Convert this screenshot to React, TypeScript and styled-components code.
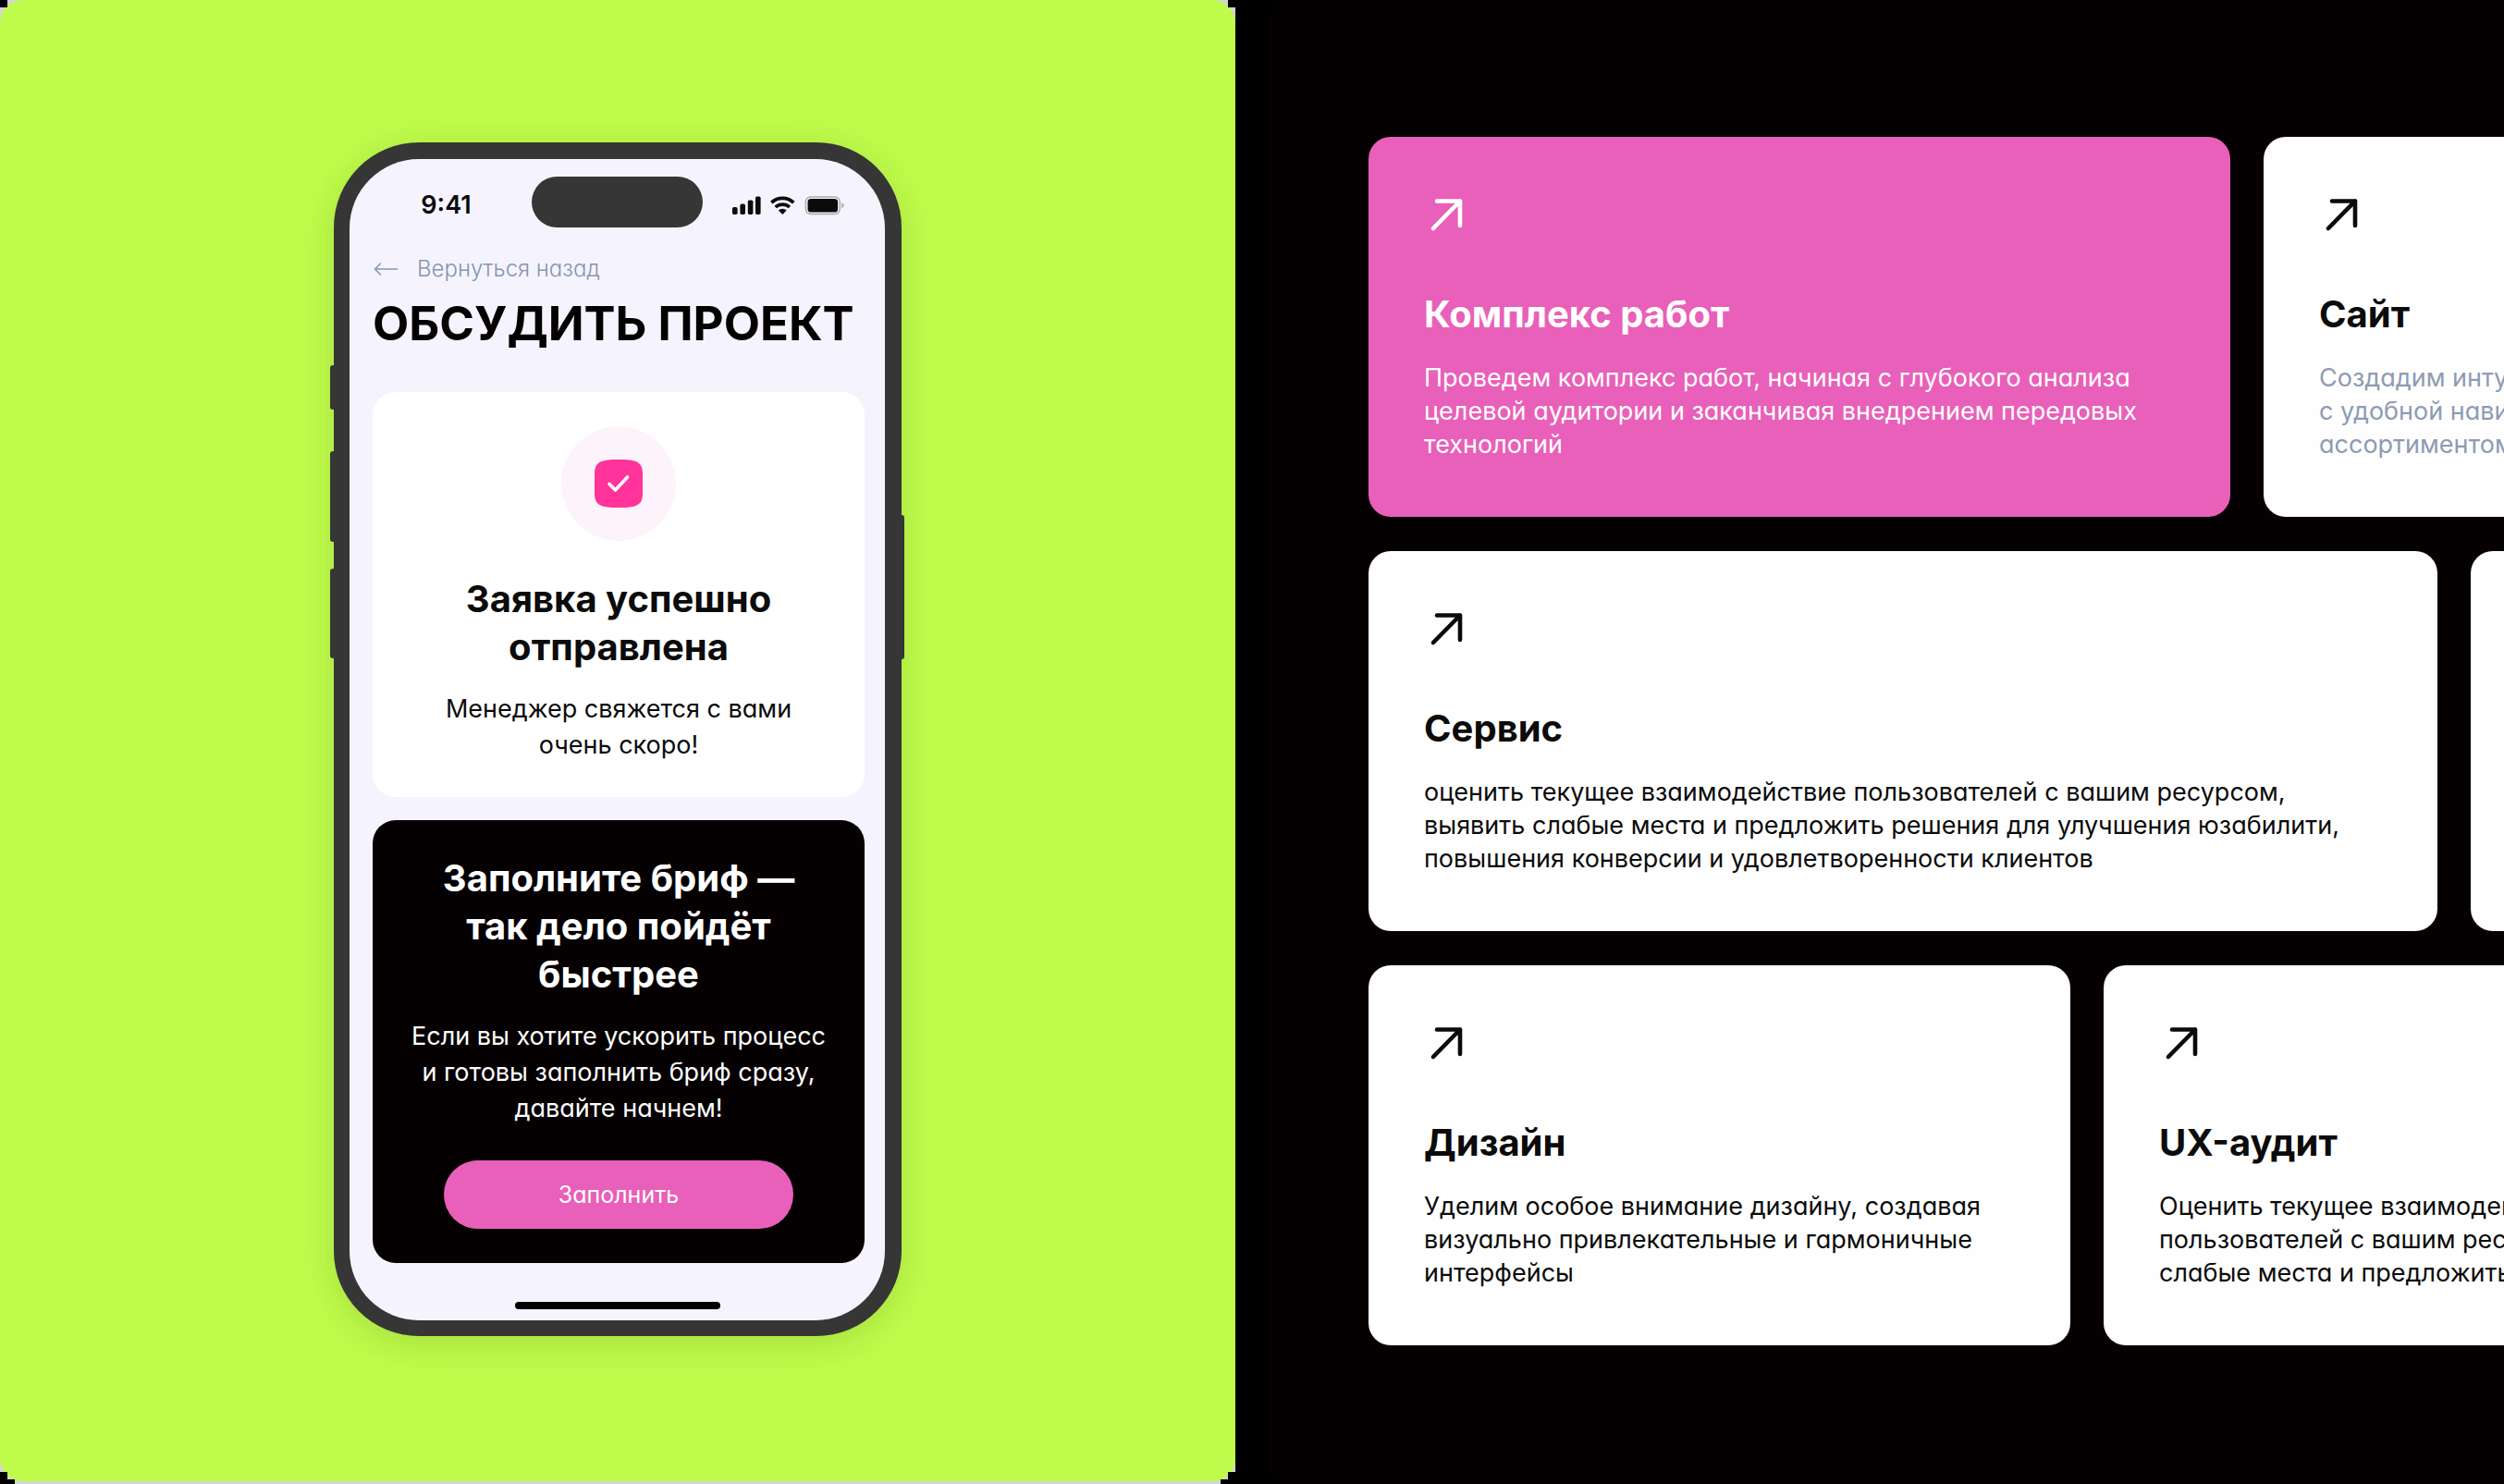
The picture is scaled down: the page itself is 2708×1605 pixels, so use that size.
import React from "react";
import styled, { createGlobalStyle } from "styled-components";

const GlobalStyle = createGlobalStyle`
  *, *::before, *::after { box-sizing: border-box; }
  body {
    margin: 0;
    background: #000;
    font-family: Inter, "Noto Sans", sans-serif;
    color: #0b0b0b;
  }
  h1, h2, h3, p { margin: 0; }
`;

const Page = styled.main`
  display: grid;
  grid-template-columns: minmax(0, 1fr) minmax(0, 1fr);
  gap: 36px;
  min-height: 100vh;
  overflow: hidden;
`;

/* Light backing with stepped corners that peeks out behind the green panel */
const Backing = styled.section`
  display: flex;
  padding-bottom: 3px;
  background: #d4d4d4;
  clip-path: polygon(
    8px 0, calc(100% - 8px) 0, calc(100% - 8px) 8px, 100% 8px,
    100% calc(100% - 13px), calc(100% - 8px) calc(100% - 13px),
    calc(100% - 8px) calc(100% - 5px), calc(100% - 16px) calc(100% - 5px),
    calc(100% - 16px) 100%, 16px 100%, 16px calc(100% - 5px),
    8px calc(100% - 5px), 8px calc(100% - 13px), 0 calc(100% - 13px), 0 8px, 8px 8px
  );
`;

const PhoneStage = styled.div`
  flex: 1;
  display: flex;
  justify-content: center;
  align-items: flex-start;
  padding: 154px 24px;
  border-radius: 25px;
  background: #bffb4a;
`;

const Phone = styled.div`
  position: relative;
  width: 614px;
  border: solid #363636;
  border-width: 18px 18px 17px 17px;
  border-radius: 92px;
  background: #363636;
  box-shadow: 0 8px 36px rgba(30, 60, 0, 0.14);
`;

const SideKey = styled.span<{ $side: "left" | "right"; $top: number; $length: number }>`
  position: absolute;
  top: ${(p) => p.$top}px;
  ${(p) => p.$side}: -21px;
  width: 8px;
  height: ${(p) => p.$length}px;
  border-radius: 3px;
  background: #363636;
`;

const Screen = styled.div`
  position: relative;
  display: flex;
  flex-direction: column;
  padding: 19px 0 12px;
  border-radius: 75px;
  background: #f5f4fe;
`;

const StatusBar = styled.div`
  display: grid;
  grid-template-columns: 1fr 185px 1fr;
  align-items: center;
  padding: 0 12px;
`;

const Clock = styled.time`
  padding-top: 6px;
  font-size: 27px;
  line-height: 32px;
  font-weight: 600;
  text-align: center;
`;

const Island = styled.div`
  height: 55px;
  border-radius: 28px;
  background: #363636;
`;

const StatusIcons = styled.div`
  display: flex;
  justify-content: center;
  padding-top: 6px;
`;

const ScreenBody = styled.div`
  display: flex;
  flex-direction: column;
  padding: 29px 22px 42px 25px;
`;

const BackLink = styled.a`
  display: flex;
  align-items: center;
  gap: 20px;
  font-size: 24px;
  line-height: 32px;
  font-weight: 300;
  font-feature-settings: "cv11";
  color: #8795b0;
  text-decoration: none;
`;

const ScreenTitle = styled.h1`
  margin: 13px 0 44px;
  font-size: 51px;
  line-height: 60px;
  font-weight: 700;
  white-space: nowrap;
  color: #050102;
`;

const Panel = styled.section<{ $dark?: boolean }>`
  display: flex;
  flex-direction: column;
  align-items: center;
  padding: 37px 0;
  border-radius: 25px;
  text-align: center;
  background: ${(p) => (p.$dark ? "#050102" : "#fff")};
  color: ${(p) => (p.$dark ? "#fff" : "#0b0b0b")};

  & + & { margin-top: 25px; }
`;

const Badge = styled.div`
  display: grid;
  place-items: center;
  width: 124px;
  height: 124px;
  margin-bottom: 37px;
  border-radius: 50%;
  background: #fdf3fb;
`;

const PanelTitle = styled.h2`
  font-size: 40px;
  line-height: 52px;
  font-weight: 700;
`;

const PanelText = styled.p`
  margin-top: 21px;
  font-size: 27px;
  line-height: 39px;
  font-feature-settings: "cv11";
  white-space: nowrap;
`;

const FillButton = styled.button`
  width: 378px;
  height: 74px;
  margin-top: 37px;
  border: 0;
  border-radius: 37px;
  background: #e860b9;
  color: #fff;
  font: inherit;
  font-size: 25px;
  font-feature-settings: "cv11";
`;

const HomeBar = styled.div`
  align-self: center;
  width: 222px;
  height: 8px;
  border-radius: 4px;
  background: #000;
`;

const Services = styled.section`
  display: flex;
  flex-direction: column;
  gap: 37px;
  padding: 148px 0 148px 108px;
  border-radius: 25px 0 0 25px;
  background: #050102;
  overflow: hidden;
`;

const ServiceRow = styled.div`
  display: flex;
  gap: 36px;
`;

const Card = styled.a<{ $width: number; $accent?: boolean }>`
  flex: 0 0 ${(p) => p.$width}px;
  padding: 60px;
  border-radius: 24px;
  background: ${(p) => (p.$accent ? "#e860b9" : "#fefefe")};
  color: ${(p) => (p.$accent ? "#fff" : "#0b0b0b")};
  text-decoration: none;
`;

const ArrowIcon = styled.svg`
  display: block;
  width: 48px;
  height: 48px;
`;

const CardTitle = styled.h3`
  margin: 60px 0 27px;
  font-size: 40px;
  line-height: 48px;
  font-weight: 700;
`;

const CardText = styled.p<{ $muted?: boolean }>`
  font-size: 27px;
  line-height: 36px;
  font-feature-settings: "cv11";
  white-space: nowrap;
  color: ${(p) => (p.$muted ? "#8e9bb3" : "inherit")};
`;

type Service = {
  title: string;
  lines: string[];
  width: number;
  accent?: boolean;
  muted?: boolean;
};

const rows: Service[][] = [
  [
    {
      title: "Комплекс работ",
      lines: [
        "Проведем комплекс работ, начиная с глубокого анализа",
        "целевой аудитории и заканчивая внедрением передовых",
        "технологий",
      ],
      width: 932,
      accent: true,
    },
    {
      title: "Сайт",
      lines: ["Создадим интуитивный сайт", "с удобной навигацией", "ассортиментом товаров"],
      width: 932,
      muted: true,
    },
  ],
  [
    {
      title: "Сервис",
      lines: [
        "оценить текущее взаимодействие пользователей с вашим ресурсом,",
        "выявить слабые места и предложить решения для улучшения юзабилити,",
        "повышения конверсии и удовлетворенности клиентов",
      ],
      width: 1156,
    },
    { title: "", lines: [], width: 759 },
  ],
  [
    {
      title: "Дизайн",
      lines: [
        "Уделим особое внимание дизайну, создавая",
        "визуально привлекательные и гармоничные",
        "интерфейсы",
      ],
      width: 759,
    },
    {
      title: "UX-аудит",
      lines: [
        "Оценить текущее взаимодействие",
        "пользователей с вашим ресурсом,",
        "слабые места и предложить",
      ],
      width: 932,
    },
  ],
];

function Lines({ items }: { items: string[] }) {
  return (
    <>
      {items.map((line, i) => (
        <React.Fragment key={line}>
          {i > 0 && <br />}
          {line}
        </React.Fragment>
      ))}
    </>
  );
}

function ServiceCard({ title, lines, width, accent, muted }: Service) {
  if (!title) return <Card as="div" $width={width} />;
  return (
    <Card href="#" $width={width} $accent={accent}>
      <ArrowIcon viewBox="0 0 48 48" fill="none" stroke="currentColor" strokeWidth="4.6" strokeLinecap="round" strokeLinejoin="round" aria-hidden="true">
        <path d="M14 9.5H39V36M39 9.5L10 39" />
      </ArrowIcon>
      <CardTitle>{title}</CardTitle>
      <CardText $muted={muted}>
        <Lines items={lines} />
      </CardText>
    </Card>
  );
}

export default function App() {
  return (
    <>
      <GlobalStyle />
      <Page>
        <Backing>
          <PhoneStage>
            <Phone>
              <SideKey $side="left" $top={223} $length={48} />
              <SideKey $side="left" $top={316} $length={98} />
              <SideKey $side="left" $top={443} $length={97} />
              <SideKey $side="right" $top={385} $length={156} />
              <Screen>
                <StatusBar>
                  <Clock>9:41</Clock>
                  <Island />
                  <StatusIcons>
                    <svg width="122" height="24" viewBox="0 0 122 24" aria-hidden="true">
                      <g fill="#0b0b0b">
                        <rect x="0" y="14" width="5.6" height="8" rx="1.8" />
                        <rect x="8.4" y="10.5" width="5.6" height="11.5" rx="1.8" />
                        <rect x="16.8" y="6.5" width="5.6" height="15.5" rx="1.8" />
                        <rect x="25" y="2.5" width="5.6" height="19.5" rx="1.8" />
                      </g>
                      <g fill="none" stroke="#0b0b0b" strokeWidth="3.7">
                        <path d="M42.3 9.2A17.4 17.4 0 0 1 66.3 9.2" />
                        <path d="M46.7 14A11.2 11.2 0 0 1 61.9 14" />
                      </g>
                      <path d="M54.3 22L49.9 17.6A6.4 6.4 0 0 1 58.7 17.6Z" fill="#0b0b0b" />
                      <rect x="79.3" y="3" width="37" height="18.5" rx="5.5" fill="none" stroke="#a9a8ad" strokeWidth="1.4" />
                      <rect x="81.5" y="5" width="32.6" height="14.5" rx="3.6" fill="#0b0b0b" />
                      <path d="M118.3 9.2V15.4C119.8 14.8 120.6 13.6 120.6 12.3C120.6 11 119.8 9.8 118.3 9.2Z" fill="#a9a8ad" />
                    </svg>
                  </StatusIcons>
                </StatusBar>
                <ScreenBody>
                  <BackLink href="#">
                    <svg width="28" height="16" viewBox="0 0 28 16" fill="none" stroke="currentColor" strokeWidth="1.6" strokeLinecap="round" strokeLinejoin="round" aria-hidden="true">
                      <path d="M26.5 8H2.5M8.5 2L2.5 8L8.5 14" />
                    </svg>
                    Вернуться назад
                  </BackLink>
                  <ScreenTitle>ОБСУДИТЬ ПРОЕКТ</ScreenTitle>
                  <Panel>
                    <Badge>
                      <svg width="52" height="52" viewBox="0 0 52 52" aria-hidden="true">
                        <path d="M26 0C45 0 52 2 52 16V36C52 50 45 52 26 52S0 50 0 36V16C0 2 7 0 26 0Z" fill="#ff3399" />
                        <path d="M16 26.5L22.5 33L35.5 19" fill="none" stroke="#fff" strokeWidth="3.6" strokeLinecap="round" strokeLinejoin="round" />
                      </svg>
                    </Badge>
                    <PanelTitle>
                      <Lines items={["Заявка успешно", "отправлена"]} />
                    </PanelTitle>
                    <PanelText>
                      <Lines items={["Менеджер свяжется с вами", "очень скоро!"]} />
                    </PanelText>
                  </Panel>
                  <Panel $dark>
                    <PanelTitle>
                      <Lines items={["Заполните бриф —", "так дело пойдёт", "быстрее"]} />
                    </PanelTitle>
                    <PanelText>
                      <Lines items={["Если вы хотите ускорить процесс", "и готовы заполнить бриф сразу,", "давайте начнем!"]} />
                    </PanelText>
                    <FillButton type="button">Заполнить</FillButton>
                  </Panel>
                </ScreenBody>
                <HomeBar />
              </Screen>
            </Phone>
          </PhoneStage>
        </Backing>
        <Services>
          {rows.map((row, i) => (
            <ServiceRow key={i}>
              {row.map((service, j) => (
                <ServiceCard key={j} {...service} />
              ))}
            </ServiceRow>
          ))}
        </Services>
      </Page>
    </>
  );
}
